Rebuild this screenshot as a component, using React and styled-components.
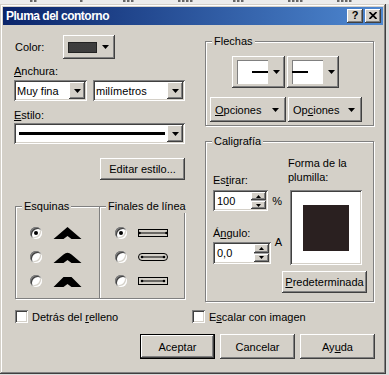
import React from "react";
import styled, { createGlobalStyle, css } from "styled-components";

const FACE = "#d4d0c8";

const Global = createGlobalStyle`
  html, body { margin: 0; padding: 0; background: #dcdcdc; }
  body {
    font-family: "Liberation Sans", Arial, sans-serif;
    font-size: 11px;
    color: #000;
  }
  * { box-sizing: border-box; }
  u { text-decoration: underline; text-underline-offset: 1px; }
`;

const raised = css`
  background: ${FACE};
  box-shadow: inset -1px -1px 0 #404040, inset 1px 1px 0 #fff,
    inset -2px -2px 0 #808080, inset 2px 2px 0 ${FACE};
`;

const sunken = css`
  background: #fff;
  box-shadow: inset 1px 1px 0 #808080, inset -1px -1px 0 #fff,
    inset 2px 2px 0 #404040, inset -2px -2px 0 ${FACE};
`;

const Page = styled.div`
  width: 389px;
  height: 375px;
  overflow: hidden;
`;

const RulerStrip = styled.div`
  height: 4px;
  background: #ececec;
  display: flex;
`;

const Window = styled.div`
  width: 386px;
  height: 370px;
  padding: 3px;
  background: ${FACE};
  box-shadow: inset -1px -1px 0 #404040, inset 1px 1px 0 ${FACE},
    inset -2px -2px 0 #808080, inset 2px 2px 0 #fff;
  display: flex;
  flex-direction: column;
`;

const TitleBar = styled.div`
  height: 18px;
  display: flex;
  align-items: center;
  padding: 0 2px 0 3px;
  background: linear-gradient(90deg, #0a246a 0%, #4e88d1 100%);
`;

const TitleText = styled.div`
  flex: 1;
  color: #fff;
  font-weight: bold;
  font-size: 12px;
  letter-spacing: -0.5px;
`;

const TitleButtons = styled.div`
  display: flex;
  gap: 2px;
`;

const CaptionButton = styled.div`
  ${raised};
  width: 16px;
  height: 14px;
  display: flex;
  align-items: center;
  justify-content: center;
  font-weight: bold;
  font-size: 11px;
  line-height: 11px;
  padding-bottom: 1px;
`;

const Content = styled.div`
  flex: 1;
  display: flex;
  flex-direction: column;
  padding: 10px 8px 0 11px;
`;

const Main = styled.div`
  display: grid;
  grid-template-columns: 171px 169px;
  column-gap: 20px;
  align-items: start;
`;

const Column = styled.div`
  display: flex;
  flex-direction: column;
`;

const Label = styled.div`
  line-height: 13px;
  white-space: nowrap;
  margin-top: ${(p) => p.$mt || 0}px;
  padding-left: ${(p) => p.$pl || 0}px;
`;

const ColorRow = styled.div`
  display: flex;
  align-items: center;
  height: 24px;
`;

const ColorLabel = styled.div`
  width: 49px;
  padding-left: 1px;
  line-height: 13px;
`;

const ColorButton = styled.div`
  ${raised};
  width: 52px;
  height: 24px;
  display: flex;
  align-items: center;
  padding: 0 6px 0 5px;
  gap: 5px;
`;

const Swatch = styled.div`
  width: 29px;
  height: 11px;
  background-color: #333;
  background-image: radial-gradient(#4a4a4a 0.6px, transparent 0.8px);
  background-size: 2px 2px;
  box-shadow: inset 0 0 0 1px #222;
`;

const ComboRow = styled.div`
  display: flex;
  gap: 6px;
  margin-top: ${(p) => p.$mt || 0}px;
`;

const Combo = styled.div`
  ${sunken};
  width: ${(p) => p.$w}px;
  height: 21px;
  padding: 2px;
  display: flex;
  align-items: stretch;
  margin-top: ${(p) => p.$mt || 0}px;
`;

const ComboText = styled.div`
  flex: 1;
  display: flex;
  align-items: center;
  padding-left: 1px;
  white-space: nowrap;
`;

const StyleField = styled.div`
  flex: 1;
  display: flex;
  align-items: center;
  padding: 0 2px 0 3px;
`;

const StyleLine = styled.div`
  height: 3px;
  width: 100%;
  background: #000;
`;

const DropButton = styled.div`
  ${raised};
  width: 16px;
  display: flex;
  align-items: center;
  justify-content: center;
`;

const PushButton = styled.div`
  ${raised};
  width: ${(p) => p.$w}px;
  height: ${(p) => p.$h || 22}px;
  display: flex;
  align-items: center;
  justify-content: center;
  white-space: nowrap;
  margin-top: ${(p) => p.$mt || 0}px;
  align-self: ${(p) => p.$align || "auto"};
  ${(p) =>
    p.$default &&
    css`
      border: 1px solid #000;
    `}
`;

const GroupRow = styled.div`
  display: grid;
  grid-template-columns: 85px 85px;
  margin-top: 26px;
  margin-left: 1px;
`;

const Group = styled.div`
  position: relative;
  height: ${(p) => p.$h}px;
  margin-top: ${(p) => p.$mt || 0}px;
  border: 1px solid #808080;
  box-shadow: 1px 1px 0 #fff, inset 1px 1px 0 #fff;
  ${(p) =>
    p.$joined &&
    css`
      border-left: none;
      box-shadow: 1px 1px 0 #fff, inset 0 1px 0 #fff;
    `}
`;

const Legend = styled.div`
  position: absolute;
  top: -7px;
  left: 6px;
  padding: 0 2px;
  background: ${FACE};
  line-height: 13px;
  white-space: nowrap;
`;

const OptionList = styled.div`
  display: flex;
  flex-direction: column;
  padding: 14px 0 0 ${(p) => p.$pl}px;
`;

const OptionRow = styled.div`
  height: 24px;
  display: flex;
  align-items: center;
  gap: 11px;
`;

const Radio = styled.div`
  width: 12px;
  height: 12px;
  border-radius: 50%;
  background: #fff;
  box-shadow: inset 1px 1px 0 #808080, inset -1px -1px 0 #fff,
    inset 2px 2px 0 #404040, inset -2px -2px 0 ${FACE};
  display: flex;
  align-items: center;
  justify-content: center;
`;

const RadioDot = styled.div`
  width: 4px;
  height: 4px;
  border-radius: 50%;
  background: #000;
`;

const ArrowRow = styled.div`
  display: flex;
  gap: 2px;
  padding: 14px 0 0 26px;
`;

const ArrowButton = styled.div`
  ${raised};
  width: ${(p) => p.$w}px;
  height: 32px;
  display: flex;
  align-items: center;
  padding: 0 0 0 5px;
  gap: 5px;
`;

const ArrowField = styled.div`
  width: 31px;
  height: 24px;
  background: #fff;
  box-shadow: inset 1px 1px 0 #808080;
  display: flex;
  align-items: center;
  justify-content: ${(p) => (p.$end ? "flex-end" : "flex-start")};
`;

const ArrowStroke = styled.div`
  width: 16px;
  height: 2px;
  background: #000;
`;

const OptionsRow = styled.div`
  display: flex;
  gap: 2px;
  padding: 9px 0 0 4px;
`;

const OptionsButton = styled.div`
  ${raised};
  width: ${(p) => p.$w}px;
  height: 25px;
  display: flex;
  align-items: center;
  justify-content: space-between;
  padding: 0 7px 0 5px;
`;

const CaliInner = styled.div`
  display: grid;
  grid-template-columns: 69px 85px;
  padding-left: 7px;
`;

const CaliLeft = styled.div`
  display: flex;
  flex-direction: column;
  padding-top: 32px;
`;

const SpinRow = styled.div`
  display: flex;
  align-items: ${(p) => (p.$top ? "flex-start" : "center")};
  gap: 4px;
  margin-top: ${(p) => p.$mt || 0}px;
`;

const SpinBox = styled.div`
  ${sunken};
  width: 59px;
  height: ${(p) => p.$h}px;
  padding: 2px;
  display: flex;
`;

const SpinText = styled.div`
  flex: 1;
  display: flex;
  align-items: center;
  padding-left: 2px;
`;

const SpinButtons = styled.div`
  width: 15px;
  display: flex;
  flex-direction: column;
  gap: 1px;
  background: #a8a8a8;
`;

const SpinPart = styled.div`
  ${raised};
  flex: 1;
  display: flex;
  align-items: center;
  justify-content: center;
`;

const Unit = styled.div`
  line-height: 13px;
  margin-top: ${(p) => p.$mt || 0}px;
`;

const CaliRight = styled.div`
  display: flex;
  flex-direction: column;
  padding-top: 14px;
`;

const PenCaption = styled.div`
  line-height: 14px;
  padding-left: 6px;
`;

const Preview = styled.div`
  ${sunken};
  width: 72px;
  height: 75px;
  margin: 6px 0 0 8px;
  display: flex;
  align-items: center;
  justify-content: center;
`;

const Nib = styled.div`
  width: 46px;
  height: 46px;
  background: #2a2020;
`;

const CheckRow = styled.div`
  display: flex;
  margin-top: 8px;
  padding-left: 1px;
`;

const CheckItem = styled.div`
  display: flex;
  align-items: center;
  gap: 4px;
  width: ${(p) => p.$w || "auto"};
  white-space: nowrap;
`;

const CheckBox = styled.div`
  ${sunken};
  width: 13px;
  height: 13px;
`;

const ButtonRow = styled.div`
  display: flex;
  justify-content: flex-end;
  gap: 5px;
  margin-top: 11px;
`;

const Down = ({ w = 7, h = 4 }) => (
  <svg width={w} height={h} viewBox={`0 0 ${w} ${h}`}>
    <polygon points={`0,0 ${w},0 ${w / 2},${h}`} fill="#000" />
  </svg>
);

const Up = ({ w = 5, h = 3 }) => (
  <svg width={w} height={h} viewBox={`0 0 ${w} ${h}`}>
    <polygon points={`0,${h} ${w},${h} ${w / 2},0`} fill="#000" />
  </svg>
);

const RulerTicks = () => {
  const marks = [
    [30, 8],
    [80, 4],
    [123, 9],
    [178, 14],
    [233, 12],
    [288, 14],
    [337, 13],
  ];
  return (
    <svg width="389" height="4" viewBox="0 0 389 4">
      {marks.map(([x, w]) => (
        <g key={x} fill="#666">
          {Array.from({ length: Math.ceil(w / 4) }).map((_, i) => (
            <rect key={i} x={x + i * 4} y="0" width="2.5" height="2" />
          ))}
        </g>
      ))}
    </svg>
  );
};

const CornerIcon = ({ kind }) => {
  const d =
    kind === "miter"
      ? "M0 12 L14 0 L28 12 L18 12 L14 9 L10 12 Z"
      : kind === "round"
      ? "M0 12 L10 3.5 Q14 0 18 3.5 L28 12 L18 12 L14 9 L10 12 Z"
      : "M0 12 L10 2 L18 2 L28 12 L18 12 L14 9 L10 12 Z";
  return (
    <svg width="29" height="13" viewBox="0 0 28 13">
      <path d={d} fill="#000" />
    </svg>
  );
};

const CapIcon = ({ kind }) => {
  const inset = kind === "butt" ? 1.5 : 4;
  return (
    <svg width="31" height="10" viewBox="0 0 31 10">
      <rect
        x="0.5"
        y="1.5"
        width="29"
        height="7"
        rx={kind === "round" ? 3.5 : 0}
        fill="none"
        stroke="#000"
      />
      <line x1={inset} y1="5" x2={30 - inset} y2="5" stroke="#000" />
      <circle cx={inset} cy="5" r="1.3" fill="#000" />
      <circle cx={30 - inset} cy="5" r="1.3" fill="#000" />
    </svg>
  );
};

const CloseGlyph = () => (
  <svg width="8" height="7" viewBox="0 0 8 7">
    <path d="M0.5 0 L7.5 7 M7.5 0 L0.5 7" stroke="#000" strokeWidth="1.7" />
  </svg>
);

const corners = ["miter", "round", "bevel"];
const caps = ["butt", "round", "square"];

export default function App() {
  return (
    <Page>
      <Global />
      <RulerStrip>
        <RulerTicks />
      </RulerStrip>
      <Window>
        <TitleBar>
          <TitleText>Pluma del contorno</TitleText>
          <TitleButtons>
            <CaptionButton>?</CaptionButton>
            <CaptionButton>
              <CloseGlyph />
            </CaptionButton>
          </TitleButtons>
        </TitleBar>
        <Content>
          <Main>
            <Column>
              <ColorRow>
                <ColorLabel>Color:</ColorLabel>
                <ColorButton>
                  <Swatch />
                  <Down />
                </ColorButton>
              </ColorRow>
              <Label $mt={6}>
                <u>A</u>nchura:
              </Label>
              <ComboRow $mt={2}>
                <Combo $w={73}>
                  <ComboText>Muy fina</ComboText>
                  <DropButton>
                    <Down />
                  </DropButton>
                </Combo>
                <Combo $w={92}>
                  <ComboText>milímetros</ComboText>
                  <DropButton>
                    <Down />
                  </DropButton>
                </Combo>
              </ComboRow>
              <Label $mt={8}>
                <u>E</u>stilo:
              </Label>
              <Combo $w={171} $mt={1}>
                <StyleField>
                  <StyleLine />
                </StyleField>
                <DropButton>
                  <Down />
                </DropButton>
              </Combo>
              <PushButton $w={85} $h={22} $mt={14} $align="flex-end">
                Editar estilo...
              </PushButton>
              <GroupRow>
                <Group $h={93}>
                  <Legend>Esquinas</Legend>
                  <OptionList $pl={14}>
                    {corners.map((c, i) => (
                      <OptionRow key={c}>
                        <Radio>{i === 0 && <RadioDot />}</Radio>
                        <CornerIcon kind={c} />
                      </OptionRow>
                    ))}
                  </OptionList>
                </Group>
                <Group $h={93} $joined>
                  <Legend>Finales de línea</Legend>
                  <OptionList $pl={15}>
                    {caps.map((c, i) => (
                      <OptionRow key={c}>
                        <Radio>{i === 0 && <RadioDot />}</Radio>
                        <CapIcon kind={c} />
                      </OptionRow>
                    ))}
                  </OptionList>
                </Group>
              </GroupRow>
            </Column>

            <Column>
              <Group $h={85} $mt={6}>
                <Legend>Flechas</Legend>
                <ArrowRow>
                  <ArrowButton $w={53}>
                    <ArrowField $end>
                      <ArrowStroke />
                    </ArrowField>
                    <Down />
                  </ArrowButton>
                  <ArrowButton $w={52}>
                    <ArrowField>
                      <ArrowStroke />
                    </ArrowField>
                    <Down />
                  </ArrowButton>
                </ArrowRow>
                <OptionsRow>
                  <OptionsButton $w={76}>
                    <span>
                      <u>O</u>pciones
                    </span>
                    <Down />
                  </OptionsButton>
                  <OptionsButton $w={74}>
                    <span>
                      Op<u>c</u>iones
                    </span>
                    <Down />
                  </OptionsButton>
                </OptionsRow>
              </Group>

              <Group $h={161} $mt={15}>
                <Legend>Caligrafía</Legend>
                <CaliInner>
                  <CaliLeft>
                    <Label>
                      Es<u>t</u>irar:
                    </Label>
                    <SpinRow $mt={3}>
                      <SpinBox $h={21}>
                        <SpinText>100</SpinText>
                        <SpinButtons>
                          <SpinPart>
                            <Up />
                          </SpinPart>
                          <SpinPart>
                            <Down w={5} h={3} />
                          </SpinPart>
                        </SpinButtons>
                      </SpinBox>
                      <Unit $mt={2}>%</Unit>
                    </SpinRow>
                    <Label $mt={16}>
                      Á<u>n</u>gulo:
                    </Label>
                    <SpinRow $mt={2} $top>
                      <SpinBox $h={22}>
                        <SpinText>0,0</SpinText>
                        <SpinButtons>
                          <SpinPart>
                            <Up />
                          </SpinPart>
                          <SpinPart>
                            <Down w={5} h={3} />
                          </SpinPart>
                        </SpinButtons>
                      </SpinBox>
                      <Unit $mt={-6}>A</Unit>
                    </SpinRow>
                  </CaliLeft>
                  <CaliRight>
                    <PenCaption>
                      Forma de la
                      <br />
                      plumilla:
                    </PenCaption>
                    <Preview>
                      <Nib />
                    </Preview>
                    <PushButton $w={85} $h={22} $mt={6}>
                      <span>
                        <u>P</u>redeterminada
                      </span>
                    </PushButton>
                  </CaliRight>
                </CaliInner>
              </Group>
            </Column>
          </Main>

          <CheckRow>
            <CheckItem $w="177px">
              <CheckBox />
              <span>
                Detrás del <u>r</u>elleno
              </span>
            </CheckItem>
            <CheckItem>
              <CheckBox />
              <span>
                E<u>s</u>calar con imagen
              </span>
            </CheckItem>
          </CheckRow>

          <ButtonRow>
            <PushButton $w={75} $h={25} $default>
              Aceptar
            </PushButton>
            <PushButton $w={75} $h={25}>
              Cancelar
            </PushButton>
            <PushButton $w={75} $h={25}>
              <span>
                Ay<u>u</u>da
              </span>
            </PushButton>
          </ButtonRow>
        </Content>
      </Window>
    </Page>
  );
}
